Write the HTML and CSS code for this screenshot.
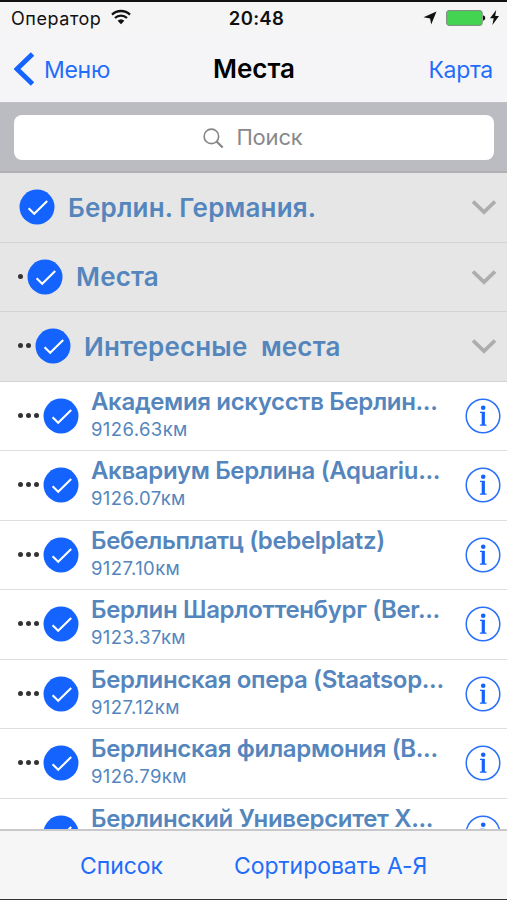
FILE: index.html
```html
<!DOCTYPE html>
<html lang="ru">
<head>
    <meta charset="UTF-8">
    <meta name="viewport" content="width=device-width, initial-scale=1.0">
    <title>Места</title>
    <link rel="stylesheet" href="styles.css">
</head>
<body>
    <svg class="sprite">
        <symbol id="check" viewBox="0 0 36 36">
            <circle cx="18" cy="18" r="17.5" fill="#1463ff"/>
            <path d="M9.6 19.2l5.6 5.6L28.2 12" fill="none" stroke="#fff" stroke-width="2.1"/>
        </symbol>
        <symbol id="info" viewBox="0 0 36 36">
            <circle cx="18" cy="18" r="16.8" fill="none" stroke="#2a70f8" stroke-width="1.5"/>
            <circle cx="18.2" cy="9.7" r="2.3" fill="#1463ff"/>
            <path d="M15 13.8h4.9v12.8h1.6v1.2h-6.6v-1.2h1.8V15H15z" fill="#1463ff"/>
        </symbol>
        <symbol id="chevron" viewBox="0 0 26 18">
            <path d="M2 2.5l11 10.6 11-10.6" fill="none" stroke="#adadad" stroke-width="3.8"/>
        </symbol>
    </svg>

    <div class="app">
        <div class="status">
            <div class="carrier">
                <span class="operator">Оператор</span>
                <svg class="wifi" viewBox="0 0 20 16">
                    <path d="M1 5.6a13 13 0 0 1 18 0M4 9a8.6 8.6 0 0 1 12 0" fill="none" stroke="#111" stroke-width="2.3"/>
                    <path d="M6.6 11.8a5 5 0 0 1 6.8 0L10 15.3z" fill="#111"/>
                </svg>
            </div>
            <span class="time">20:48</span>
            <div class="indicators">
                <svg class="location" viewBox="0 0 14 14"><path d="M13.5.5L8.2 13.6 7.1 7.4.5 6.2z" fill="#111"/></svg>
                <svg class="battery" viewBox="0 0 40 16">
                    <rect x=".6" y=".6" width="35.6" height="14.8" rx="2.4" fill="#43d551" stroke="#7d877d" stroke-width="1"/>
                    <path d="M37 5.2q2.3.6 2.3 2.8T37 10.8z" fill="#111"/>
                </svg>
                <svg class="bolt" viewBox="0 0 9 15"><path d="M6.2 0L0 8.3h3.7L2.4 15 9 6H5.2z" fill="#111"/></svg>
            </div>
        </div>

        <div class="navbar">
            <div class="back">
                <svg class="arrow" viewBox="0 0 20 34"><path d="M18.5 2L3 17l15.5 15" fill="none" stroke="#1463ff" stroke-width="4.8"/></svg>
                <span>Меню</span>
            </div>
            <div class="title">Места</div>
            <div class="map">Карта</div>
        </div>

        <div class="search">
            <div class="field">
                <svg class="lens" viewBox="0 0 22 22"><circle cx="8.8" cy="8.8" r="7.6" fill="none" stroke="#858587" stroke-width="1.7"/><path d="M14.2 14.2l6.4 6.2" stroke="#858587" stroke-width="2.3"/></svg>
                <span>Поиск</span>
            </div>
        </div>

        <div class="list">
            <div class="row group">
                <svg class="check"><use href="#check"/></svg>
                <div class="name">Берлин. Германия.</div>
                <svg class="chevron"><use href="#chevron"/></svg>
            </div>
            <div class="row group">
                <div class="dots"><i></i></div>
                <svg class="check"><use href="#check"/></svg>
                <div class="name">Места</div>
                <svg class="chevron"><use href="#chevron"/></svg>
            </div>
            <div class="row group">
                <div class="dots"><i></i><i></i></div>
                <svg class="check"><use href="#check"/></svg>
                <div class="name">Интересные&nbsp; места</div>
                <svg class="chevron"><use href="#chevron"/></svg>
            </div>

            <div class="row">
                <div class="dots"><i></i><i></i><i></i></div>
                <svg class="check"><use href="#check"/></svg>
                <div class="place">
                    <div class="place-name">Академия искусств Берлин...</div>
                    <div class="distance">9126.63км</div>
                </div>
                <svg class="info"><use href="#info"/></svg>
            </div>
            <div class="row">
                <div class="dots"><i></i><i></i><i></i></div>
                <svg class="check"><use href="#check"/></svg>
                <div class="place">
                    <div class="place-name">Аквариум Берлина (Aquariu...</div>
                    <div class="distance">9126.07км</div>
                </div>
                <svg class="info"><use href="#info"/></svg>
            </div>
            <div class="row">
                <div class="dots"><i></i><i></i><i></i></div>
                <svg class="check"><use href="#check"/></svg>
                <div class="place">
                    <div class="place-name">Бебельплатц (bebelplatz)</div>
                    <div class="distance">9127.10км</div>
                </div>
                <svg class="info"><use href="#info"/></svg>
            </div>
            <div class="row">
                <div class="dots"><i></i><i></i><i></i></div>
                <svg class="check"><use href="#check"/></svg>
                <div class="place">
                    <div class="place-name">Берлин Шарлоттенбург (Ber...</div>
                    <div class="distance">9123.37км</div>
                </div>
                <svg class="info"><use href="#info"/></svg>
            </div>
            <div class="row">
                <div class="dots"><i></i><i></i><i></i></div>
                <svg class="check"><use href="#check"/></svg>
                <div class="place">
                    <div class="place-name">Берлинская опера (Staatsop...</div>
                    <div class="distance">9127.12км</div>
                </div>
                <svg class="info"><use href="#info"/></svg>
            </div>
            <div class="row">
                <div class="dots"><i></i><i></i><i></i></div>
                <svg class="check"><use href="#check"/></svg>
                <div class="place">
                    <div class="place-name">Берлинская филармония (B...</div>
                    <div class="distance">9126.79км</div>
                </div>
                <svg class="info"><use href="#info"/></svg>
            </div>
            <div class="row">
                <div class="dots"><i></i><i></i><i></i></div>
                <svg class="check"><use href="#check"/></svg>
                <div class="place">
                    <div class="place-name">Берлинский Университет Х...</div>
                </div>
                <svg class="info"><use href="#info"/></svg>
            </div>
        </div>

        <div class="toolbar">
            <span>Список</span>
            <span>Сортировать А-Я</span>
        </div>
    </div>
</body>
</html>
```
FILE: styles.css
```css
* {
    margin: 0;
    padding: 0;
    box-sizing: border-box;
}

body {
    font-family: Inter, 'Liberation Sans', sans-serif;
    background: #fff;
    overflow: hidden;
}

svg {
    display: block;
    flex: none;
}

.sprite {
    display: none;
}

.app {
    width: 507px;
    height: 900px;
    display: flex;
    flex-direction: column;
    border-top: 2px solid #111;
    border-bottom: 1px solid #333;
    white-space: nowrap;
}

.status {
    height: 33px;
    flex: none;
    display: grid;
    grid-template-columns: 1fr auto 1fr;
    align-items: center;
    padding: 0 8px 0 11px;
    background: #f5f5f6;
    color: #111;
    font-size: 18px;
}

.carrier {
    display: flex;
    align-items: center;
    gap: 10px;
}

.operator {
    letter-spacing: 0.55px;
}

.wifi {
    width: 20px;
    height: 16px;
    margin-top: -3px;
}

.time {
    padding: 0 0 2px 3px;
    font-weight: 600;
    font-size: 18.5px;
    letter-spacing: 0.3px;
}

.indicators {
    display: flex;
    align-items: center;
    justify-content: flex-end;
    padding-bottom: 2px;
}

.location {
    width: 14px;
    height: 14px;
}

.battery {
    width: 40px;
    height: 16px;
    margin: 0 4px 0 9px;
}

.bolt {
    width: 9px;
    height: 15px;
}

.navbar {
    height: 68px;
    flex: none;
    display: grid;
    grid-template-columns: 1fr auto 1fr;
    align-items: center;
    padding: 0 14px;
    background: #f5f5f7;
    border-bottom: 1px solid #c0c0c4;
    font-size: 23px;
    letter-spacing: -0.3px;
    color: #1f6dfa;
}

.back {
    display: flex;
    align-items: center;
    gap: 10px;
}

.back span,
.map {
    padding-top: 2px;
}

.arrow {
    width: 20px;
    height: 34px;
}

.title {
    color: #000;
    font-size: 26px;
    font-weight: 600;
    letter-spacing: 0;
    padding-left: 1px;
}

.map {
    text-align: right;
}

.search {
    height: 70px;
    flex: none;
    padding: 12px 13px 0 14px;
    background: #bbbbc2;
    border-bottom: 2px solid #b0b0b4;
}

.field {
    height: 45px;
    display: flex;
    align-items: center;
    justify-content: center;
    gap: 12px;
    padding: 0 2px 1px 0;
    background: #fff;
    border-radius: 8px;
    color: #88888a;
    font-size: 22px;
    letter-spacing: -0.2px;
}

.lens {
    width: 21px;
    height: 21px;
    margin-top: 2px;
}

.list {
    flex: 1;
    min-height: 0;
    overflow: hidden;
}

.row {
    height: 69.5px;
    display: flex;
    align-items: center;
    padding: 0 6px 0 18px;
    border-bottom: 1px solid #dedede;
    color: #5486bd;
}

.group {
    background: #e6e6e6;
    border-bottom-color: #d3d3d3;
}

.dots {
    display: flex;
    gap: 3px;
    padding-bottom: 1px;
}

.dots i {
    width: 5px;
    height: 5px;
    border-radius: 50%;
    background: #333;
}

.check {
    width: 36px;
    height: 36px;
    margin-left: 4px;
}

.check:first-child {
    margin-left: 1px;
}

.name {
    flex: 1;
    margin-left: 13px;
    font-size: 26px;
    font-weight: 600;
    letter-spacing: 0.17px;
}

.chevron {
    width: 26px;
    height: 18px;
    margin: 2px 4px 0 0;
}

.place {
    flex: 1;
    align-self: flex-start;
    margin-left: 12px;
    padding-top: 5px;
}

.place-name {
    font-size: 24px;
    line-height: 29px;
    font-weight: 600;
    letter-spacing: -0.34px;
}

.distance {
    font-size: 18.5px;
    line-height: 26px;
    letter-spacing: 0.4px;
}

.info {
    width: 36px;
    height: 36px;
}

.toolbar {
    height: 70px;
    flex: none;
    display: flex;
    align-items: center;
    gap: 71px;
    padding: 1px 0 0 80px;
    background: #f6f6f7;
    border-top: 2px solid #c8c8ca;
    color: #1f6dfa;
    font-size: 23px;
    letter-spacing: -0.05px;
}
```
